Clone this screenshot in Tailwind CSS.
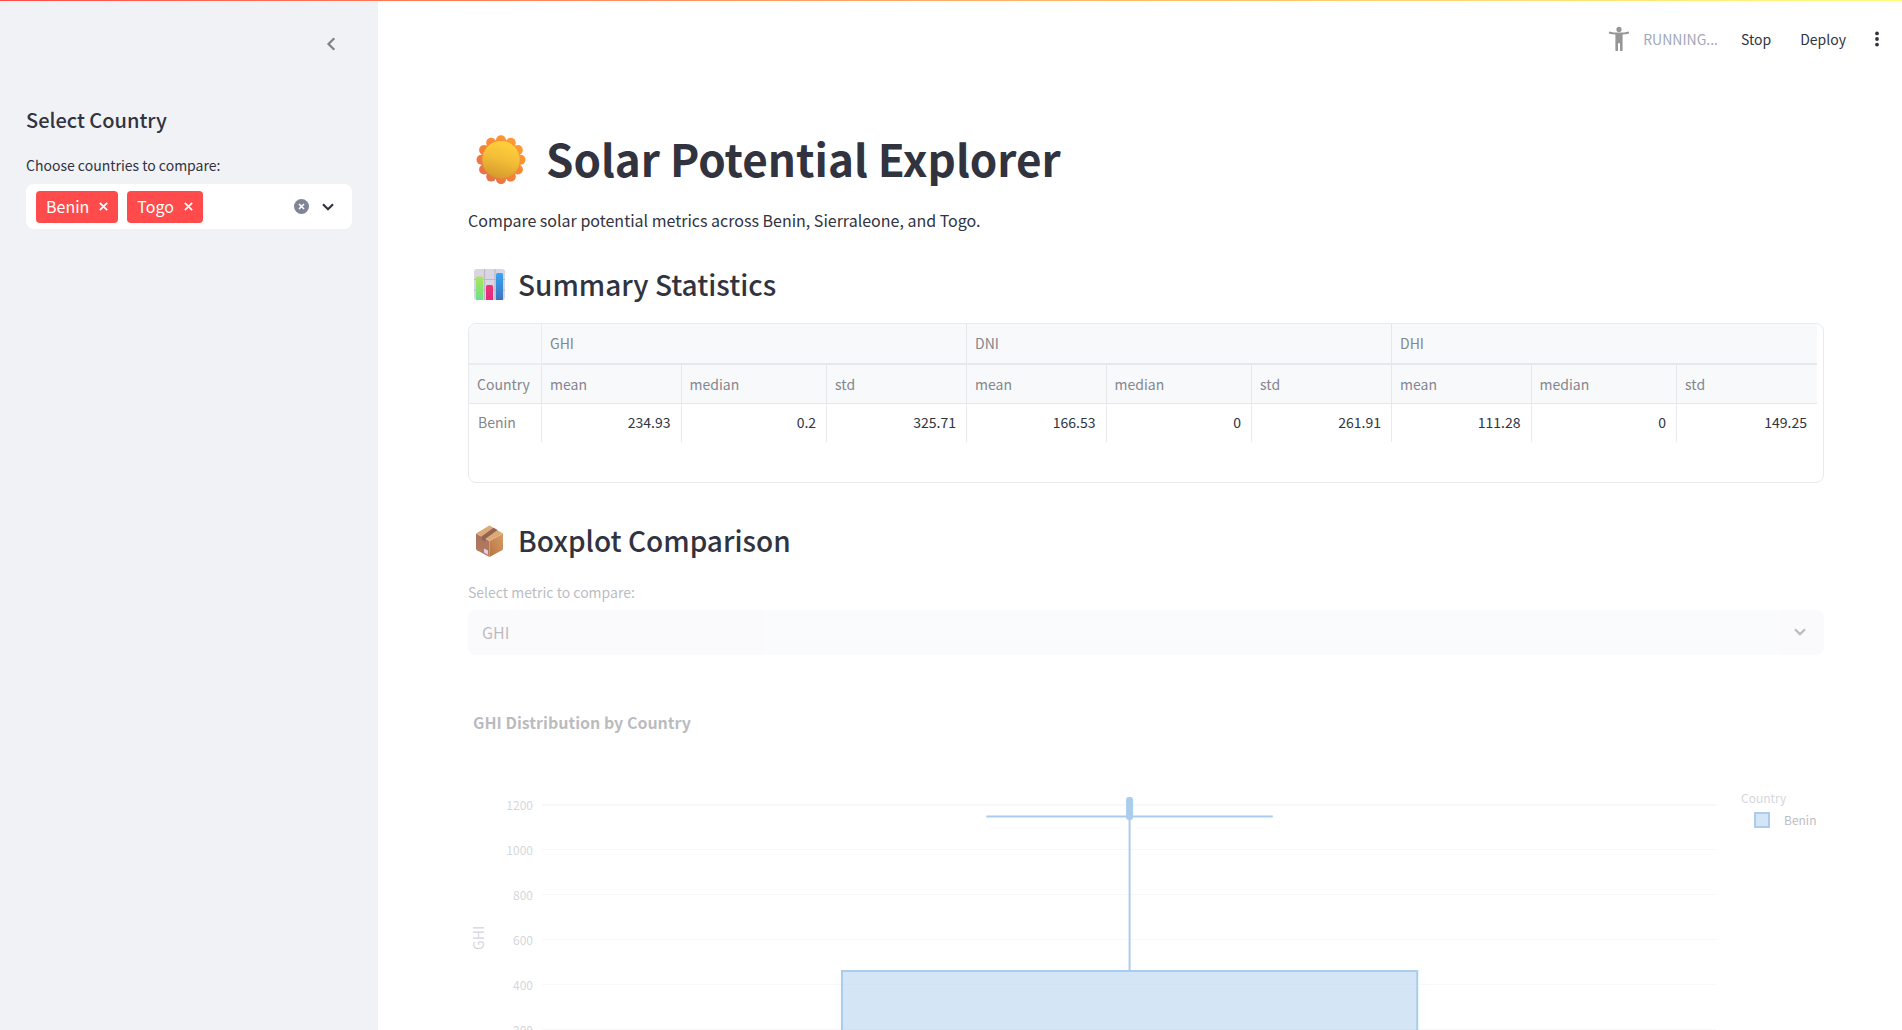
<!DOCTYPE html>
<html lang="en">
<head>
<meta charset="utf-8">
<meta name="viewport" content="width=device-width, initial-scale=1">
<title>Solar Potential Explorer</title>
<script src="https://cdn.jsdelivr.net/npm/@tailwindcss/browser@4"></script>
</head>
<body class="relative flex h-screen overflow-hidden bg-white font-['Noto_Sans_CJK_SC','Source_Sans_Pro',sans-serif] text-[#31333f]">
  <div class="absolute inset-x-0 top-0 z-10 h-px bg-linear-to-r from-[#ff4b4b] to-[#fffd80]"></div>

  <aside class="flex w-[378px] shrink-0 flex-col bg-[#f0f2f6] px-[26px]">
    <div class="flex h-[88px] items-center justify-end pr-4">
      <button type="button" aria-label="Collapse sidebar" class="flex size-[10px] items-center justify-center text-[#808088]">
        <svg class="h-[14px] w-[10px] shrink-0" viewBox="0 0 10 14" fill="none" stroke="currentColor" stroke-width="2.2"><path d="M8.3 1.2 2.5 7l5.8 5.8"/></svg>
      </button>
    </div>
    <h2 class="mt-4 text-xl leading-8 font-medium">Select Country</h2>
    <label for="countries" class="mt-[19px] text-sm leading-5">Choose countries to compare:</label>
    <div class="mt-[9px] flex h-[45px] items-center rounded-lg bg-white pr-[18px] pl-[10px]">
      <ul class="flex gap-[9px] text-base leading-[30px] text-white">
        <li class="flex h-8 items-start gap-[10px] rounded bg-[#ff4b4b] px-[10px]">
          <span>Benin</span>
          <button type="button" aria-label="Remove Benin" class="self-center"><svg class="size-[9px]" viewBox="0 0 9 9" stroke="currentColor" stroke-width="1.7"><path d="m.8.8 7.4 7.4m0-7.4L.8 8.2"/></svg></button>
        </li>
        <li class="flex h-8 items-start gap-[10px] rounded bg-[#ff4b4b] px-[10px]">
          <span>Togo</span>
          <button type="button" aria-label="Remove Togo" class="self-center"><svg class="size-[9px]" viewBox="0 0 9 9" stroke="currentColor" stroke-width="1.7"><path d="m.8.8 7.4 7.4m0-7.4L.8 8.2"/></svg></button>
        </li>
      </ul>
      <input id="countries" type="text" class="h-8 w-0 min-w-0 flex-1 outline-none">
      <button type="button" aria-label="Clear all" class="mr-[13px]">
        <svg class="size-[15px]" viewBox="0 0 15 15"><circle cx="7.5" cy="7.5" r="7.5" fill="#808495"/><path d="m5 5 5 5m0-5-5 5" stroke="#fff" stroke-width="1.6"/></svg>
      </button>
      <button type="button" aria-label="Open">
        <svg class="h-2 w-3" viewBox="0 0 12 8" fill="none" stroke="currentColor" stroke-width="2.2"><path d="m1 1.3 5 4.9 5-4.9"/></svg>
      </button>
    </div>
  </aside>

  <div class="flex min-w-0 flex-1 flex-col">
    <header class="flex h-[78px] shrink-0 items-center justify-end pr-[23px] text-sm">
      <svg class="h-[26px] w-[22px]" viewBox="0 0 22 26" fill="#969696"><circle cx="11" cy="3.4" r="2.6"/><path d="M1.2 5.4c3 .8 6.3 1.2 9.8 1.2s6.800-.4 9.800-1.200l.4 2c-2.300.6-4.500 1-6.600 1.200v15.600a.9.9 0 0 1-.9.9h-.8a.9.9 0 0 1-.9-.9v-7h-2v7a.9.9 0 0 1-.9.9h-.8a.9.9 0 0 1-.9-.9V8.600C5.300 8.400 3.100 8 .8 7.400Z"/></svg>
      <span class="ml-[13px] text-[#a3a8b8]">RUNNING...</span>
      <button type="button" class="ml-[23px]">Stop</button>
      <button type="button" class="ml-[29px]">Deploy</button>
      <button type="button" aria-label="Main menu" class="ml-[29px]">
        <svg class="h-4 w-1" viewBox="0 0 4 16" fill="currentColor"><circle cx="2" cy="2.400" r="1.900"/><circle cx="2" cy="8" r="1.900"/><circle cx="2" cy="13.600" r="1.900"/></svg>
      </button>
    </header>

    <main class="min-h-0 flex-1 overflow-hidden pt-[53px] pr-[78px] pl-[90px]">
      <h1 class="flex h-[54px] items-center gap-3 text-[44px] leading-[54px] font-bold">
        <svg class="h-[54px] w-[66px] shrink-0" viewBox="0 0 66 54" aria-hidden="true">
          <defs>
            <linearGradient id="ray" gradientUnits="userSpaceOnUse" x1="50" y1="10" x2="16" y2="48"><stop offset="0" stop-color="#ff9c34"/><stop offset=".5" stop-color="#f98434"/><stop offset="1" stop-color="#e0714c"/></linearGradient>
            <linearGradient id="disc" x1=".7" y1="0" x2=".4" y2="1"><stop offset="0" stop-color="#ffd23c"/><stop offset=".5" stop-color="#f3bd37"/><stop offset="1" stop-color="#d5992c"/></linearGradient>
          </defs>
          <g fill="url(#ray)">
            <circle cx="33" cy="28.700" r="20"/>
            <circle cx="33" cy="9.200" r="5"/><circle cx="42.800" cy="11.800" r="5"/><circle cx="49.900" cy="19" r="5"/>
            <circle cx="52.500" cy="28.700" r="5"/><circle cx="49.900" cy="38.500" r="5"/><circle cx="42.800" cy="45.600" r="5"/>
            <circle cx="33" cy="48.200" r="5"/><circle cx="23.200" cy="45.600" r="5"/><circle cx="16.100" cy="38.500" r="5"/>
            <circle cx="13.500" cy="28.700" r="5"/><circle cx="16.100" cy="19" r="5"/><circle cx="23.200" cy="11.800" r="5"/>
          </g>
          <circle cx="33" cy="28.700" r="18.800" fill="url(#disc)"/>
        </svg>
        <span>Solar Potential Explorer</span>
      </h1>
      <p class="mt-[23px] text-base leading-6">Compare solar potential metrics across Benin, Sierraleone, and Togo.</p>

      <h2 class="mt-[35px] flex items-center gap-2 text-[28px] leading-[34px] font-medium">
        <svg class="h-[34px] w-[42px] shrink-0" viewBox="0 0 42 34" aria-hidden="true">
          <defs>
            <linearGradient id="g1" x1="0" y1="0" x2="0" y2="1"><stop offset="0" stop-color="#a9e65a"/><stop offset="1" stop-color="#6be08d"/></linearGradient>
            <linearGradient id="g2" x1="0" y1="0" x2="0" y2="1"><stop offset="0" stop-color="#e4387c"/><stop offset="1" stop-color="#e8277c"/></linearGradient>
            <linearGradient id="g3" x1="0" y1="0" x2="0" y2="1"><stop offset="0" stop-color="#37a6f2"/><stop offset="1" stop-color="#3c73bf"/></linearGradient>
          </defs>
          <rect x="6" y="2" width="31" height="31" rx="3" fill="#dad5e2"/>
          <path d="M16.500 2v31M27 2v31M6 12.500h31M6 23h31" stroke="#beb8c6" stroke-width="1.200"/>
          <path d="M8 33V11a1.500 1.500 0 0 1 1.500-1.500h4A1.500 1.500 0 0 1 15 11v22Z" fill="url(#g1)"/>
          <path d="M18 33V19.500a1.500 1.500 0 0 1 1.500-1.500h4a1.500 1.500 0 0 1 1.500 1.500V33Z" fill="url(#g2)"/>
          <path d="M28 33V7.500A1.500 1.500 0 0 1 29.500 6h4A1.500 1.500 0 0 1 35 7.500V33Z" fill="url(#g3)"/>
        </svg>
        <span>Summary Statistics</span>
      </h2>

      <div class="mt-[22px] h-40 overflow-hidden rounded-lg border border-[#e9eaed]">
        <table class="w-[calc(100%-6px)] table-fixed border-separate border-spacing-0 text-sm leading-5">
          <colgroup>
            <col class="w-[73px]">
            <col class="w-[10.35%]"><col class="w-[10.8%]"><col>
            <col class="w-[10.35%]"><col class="w-[10.8%]"><col>
            <col class="w-[10.35%]"><col class="w-[10.8%]"><col>
          </colgroup>
          <thead class="bg-[#f8f9fb] text-left text-[#84868e] [&_th]:border-[#e6e7ea] [&_th]:px-2 [&_th]:pt-0 [&_th]:pb-px [&_th]:font-normal">
            <tr class="h-[41px]">
              <td class="border-r border-b-2 border-[#ebecef]"></td>
              <th scope="colgroup" colspan="3" class="border-r border-b-2">GHI</th>
              <th scope="colgroup" colspan="3" class="border-r border-b-2">DNI</th>
              <th scope="colgroup" colspan="3" class="border-b-2">DHI</th>
            </tr>
            <tr class="h-[39px]">
              <th scope="col" class="border-r border-b">Country</th>
              <th scope="col" class="border-r border-b">mean</th>
              <th scope="col" class="border-r border-b">median</th>
              <th scope="col" class="border-r border-b">std</th>
              <th scope="col" class="border-r border-b">mean</th>
              <th scope="col" class="border-r border-b">median</th>
              <th scope="col" class="border-r border-b">std</th>
              <th scope="col" class="border-r border-b">mean</th>
              <th scope="col" class="border-r border-b">median</th>
              <th scope="col" class="border-b">std</th>
            </tr>
          </thead>
          <tbody class="[&_td]:border-[#e9eaed] [&_td]:pr-[10px] [&_td]:pb-[2px]">
            <tr class="h-[38px] text-right">
              <th scope="row" class="border-r border-[#e9eaed] px-[9px] pb-[2px] text-left font-normal text-[#84868e]">Benin</th>
              <td class="border-r">234.93</td>
              <td class="border-r">0.2</td>
              <td class="border-r">325.71</td>
              <td class="border-r">166.53</td>
              <td class="border-r">0</td>
              <td class="border-r">261.91</td>
              <td class="border-r">111.28</td>
              <td class="border-r">0</td>
              <td>149.25</td>
            </tr>
          </tbody>
        </table>
      </div>

      <h2 class="mt-10 flex items-center gap-2 text-[28px] leading-[34px] font-medium">
        <svg class="h-[34px] w-[42px] shrink-0" viewBox="0 0 42 34" aria-hidden="true">
          <defs>
            <linearGradient id="bl" x1="0" y1="0" x2="0" y2="1"><stop offset="0" stop-color="#a87361"/><stop offset="1" stop-color="#b87b5c"/></linearGradient>
            <linearGradient id="br" x1="1" y1="0" x2="0" y2="1"><stop offset="0" stop-color="#d79d66"/><stop offset="1" stop-color="#b97241"/></linearGradient>
          </defs>
          <path d="M8 10.500 21.500 18v16L9 27.200a2 2 0 0 1-1-1.700Z" fill="url(#bl)"/>
          <path d="M35 10.500 21.500 18v16L34 27.200a2 2 0 0 0 1-1.700Z" fill="url(#br)"/>
          <path d="M20.500 2.900a2 2 0 0 1 2 0L35 10.500 21.500 18 8 10.500Z" fill="#dbaa78"/>
          <path d="m25.500 4.700 4 2.400L17.500 15.800v3l-4-2.200v-3.100Z" fill="#936353"/>
          <path d="m16 25.500 4 2v4.200l-4-2.200Z" fill="#e0d0e2"/>
        </svg>
        <span>Boxplot Comparison</span>
      </h2>

      <section class="opacity-33">
        <label for="metric" class="mt-[25px] block text-sm leading-5">Select metric to compare:</label>
        <div class="relative mt-2">
          <select id="metric" class="h-[45px] w-full appearance-none rounded-lg bg-[#f0f2f6] px-[14px] pb-[2px] text-base">
            <option>GHI</option><option>DNI</option><option>DHI</option>
          </select>
          <svg class="pointer-events-none absolute top-[18px] right-[18px] h-2 w-3" viewBox="0 0 12 8" fill="none" stroke="currentColor" stroke-width="2.200"><path d="m1 1.300 5 4.900 5-4.900"/></svg>
        </div>

        <h3 class="mt-[55px] pl-[5px] text-base leading-6 font-bold">GHI Distribution by Country</h3>
        <div class="mt-12 flex h-[315px] text-xs text-[#808495]">
          <div class="flex w-5 justify-center pb-[3px] text-sm leading-5"><span class="rotate-180 self-center [writing-mode:vertical-rl]">GHI</span></div>
          <ol class="flex w-[54px] flex-col pr-[9px] text-right leading-[45px]">
            <li>1200</li><li>1000</li><li>800</li><li>600</li><li>400</li><li>200</li><li>0</li>
          </ol>
          <svg class="h-full min-w-0 flex-1" role="img" aria-label="Boxplot of GHI for Benin">
            <g stroke="#e6eaf1">
              <line x1="0" x2="100%" y1="23" y2="23" stroke-width="2"/>
              <line x1="0" x2="100%" y1="67.500" y2="67.500"/>
              <line x1="0" x2="100%" y1="112.500" y2="112.500"/>
              <line x1="0" x2="100%" y1="157.500" y2="157.500"/>
              <line x1="0" x2="100%" y1="202.500" y2="202.500"/>
              <line x1="0" x2="100%" y1="247.500" y2="247.500"/>
            </g>
            <g stroke="#0068c9" stroke-width="2">
              <rect x="25.550%" y="189" width="49%" height="103" fill="#0068c9" fill-opacity=".5"/>
              <line x1="50.050%" x2="50.050%" y1="34" y2="188"/>
              <line x1="37.850%" x2="62.250%" y1="34.500" y2="34.500"/>
            </g>
            <svg x="50.050%" overflow="visible"><rect x="-3.500" y="15" width="7" height="23" rx="3" fill="#0068c9"/></svg>
          </svg>
          <div class="flex w-[108px] flex-col pt-[5px] pl-[25px] leading-[22px]">
            <span>Country</span>
            <div class="flex items-center gap-[14px] pl-[13px] text-[#31333f]"><span class="size-4 border-2 border-[#0068c9] bg-[#0068c9]/50"></span>Benin</div>
          </div>
        </div>
      </section>
    </main>
  </div>
</body>
</html>
